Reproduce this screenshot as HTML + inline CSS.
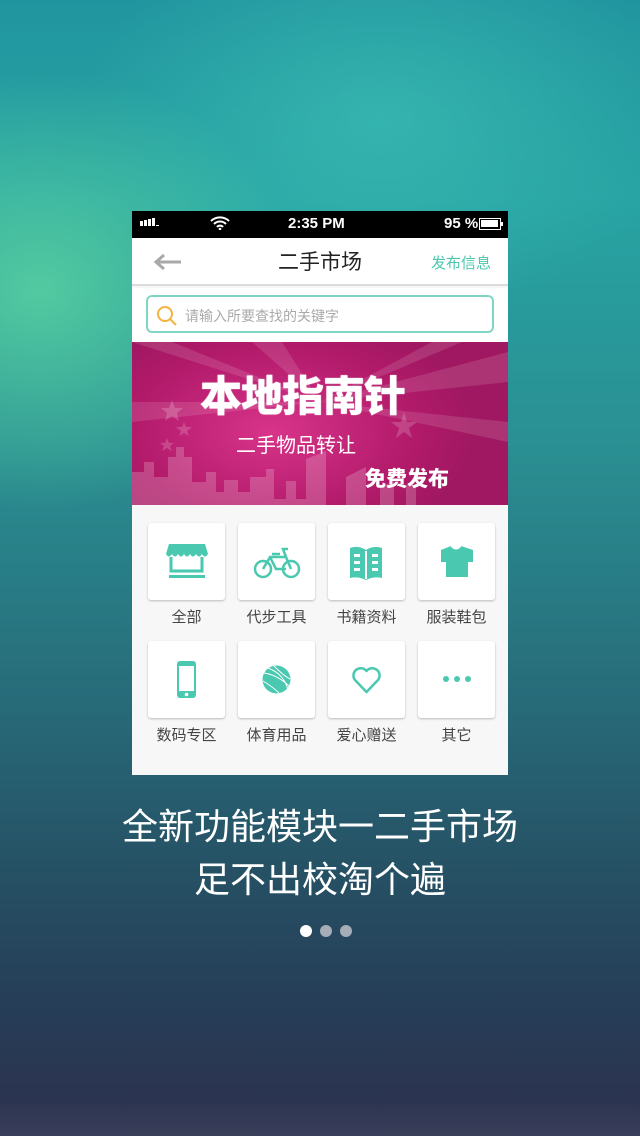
<!DOCTYPE html>
<html><head><meta charset="utf-8"><style>
*{margin:0;padding:0;box-sizing:border-box}
body{width:640px;height:1136px;overflow:hidden;position:relative;font-family:"Liberation Sans","Noto Sans CJK SC",sans-serif;
background:
radial-gradient(ellipse 260px 220px at 40px 290px,rgba(90,210,160,.85),rgba(90,210,160,0) 100%),
radial-gradient(ellipse 300px 200px at 380px 120px,rgba(60,190,180,.7),rgba(60,190,180,0) 100%),
linear-gradient(180deg,#21959f 0px,#27a3a3 200px,#2a8f92 450px,#276b79 700px,#265467 850px,#263e58 1000px,#2b3450 1100px,#3a3f5a 1136px);}
.abs{position:absolute}
.phone{left:132px;top:211px;width:376px;height:564px;background:#f7f7f7;overflow:hidden}
.sb{left:0;top:0;width:376px;height:27px;background:#000;color:#fff;font-size:15px;font-weight:bold}
.nav{left:0;top:27px;width:376px;height:48px;background:#fff;border-bottom:2px solid #dcdcdc}
.srch{left:0;top:77px;width:376px;height:54px;background:#fff}
.box{left:14px;top:7px;width:348px;height:38px;border:2px solid #7fd6c4;border-radius:6px}
.banner{left:0;top:131px;width:376px;height:163px;background:radial-gradient(ellipse 200px 120px at 140px 90px,#d8348a,#b21a6a 70%,#a11862);overflow:hidden}
.tile{width:77px;height:77px;background:#fff;border-radius:3px;box-shadow:0 1px 2px rgba(0,0,0,.25)}
.lbl{width:77px;text-align:center;font-size:15px;color:#444}
.cap{left:0;width:640px;text-align:center;color:#fff;font-size:36px}
</style></head><body>
<div class="abs phone">
 <div class="abs sb">
  <div class="abs" style="left:8px;top:10px;width:3px;height:5px;background:#fff"></div>
  <div class="abs" style="left:12px;top:9px;width:3px;height:6px;background:#fff"></div>
  <div class="abs" style="left:16px;top:8px;width:3px;height:7px;background:#fff"></div>
  <div class="abs" style="left:20px;top:7px;width:3px;height:8px;background:#fff"></div>
  <div class="abs" style="left:24px;top:14px;width:3px;height:1px;background:#fff"></div>
  <svg class="abs" style="left:78px;top:5px" width="20" height="14" viewBox="0 0 20 14"><path d="M1 5a13 13 0 0 1 18 0M4 8a8.5 8.5 0 0 1 12 0M7 11a4 4 0 0 1 6 0" stroke="#fff" stroke-width="2" fill="none"/><circle cx="10" cy="13" r="1.3" fill="#fff"/></svg>
  <div class="abs" style="left:156px;top:4px">2:35 PM</div>
  <div class="abs" style="left:312px;top:4px">95 %</div>
  <div class="abs" style="left:347px;top:7px;width:22px;height:12px;border:1.5px solid #fff"><div style="margin:1px;width:17px;height:7px;background:#fff"></div></div>
  <div class="abs" style="left:369px;top:11px;width:2px;height:4px;background:#fff"></div>
 </div>
 <div class="abs nav">
  <svg class="abs" style="left:22px;top:16px" width="28" height="16" viewBox="0 0 28 16"><path d="M27 8H3M10 1L2 8l8 7" stroke="#a9a9a9" stroke-width="3" fill="none"/></svg>
  <div class="abs" style="left:0;width:376px;top:8px;text-align:center;font-size:21px;color:#222">二手市场</div>
  <div class="abs" style="left:299px;top:14px;font-size:15px;color:#4cc7ad">发布信息</div>
 </div>
 <div class="abs srch"><div class="abs box">
  <svg class="abs" style="left:8px;top:8px" width="22" height="22" viewBox="0 0 22 22"><circle cx="9" cy="9" r="7" stroke="#f3b341" stroke-width="2" fill="none"/><path d="M14 14l6 6" stroke="#f3b341" stroke-width="2"/></svg>
  <div class="abs" style="left:37px;top:9px;font-size:14px;color:#aaa">请输入所要查找的关键字</div>
 </div></div>
 <div class="abs banner">
  <svg class="abs" style="left:0;top:0" width="376" height="163" viewBox="0 0 376 163">
   <g fill="rgba(255,255,255,.12)"><polygon points="188,60 0,0 40,0"/><polygon points="188,60 376,10 376,40"/><polygon points="188,60 376,80 376,100"/><polygon points="188,60 120,0 150,0"/><polygon points="188,60 300,0 330,0"/><polygon points="188,60 0,60 0,80"/></g>
   <g fill="rgba(255,255,255,.2)"><path d="M0 163V130h12v-10h10v15h14v-20h8v-10h8v10h8v25h14v-10h10v20h8v-12h14v12h12v-15h16v-8h8v30h12v-18h10v18h10v-40l20-8v56h20v-30l20-10v40h14v-20l14-6v26h12v-22h10v22z"/></g>
   <g fill="rgba(255,255,255,.18)"><polygon points="40,58 43,66 51,66 45,71 47,79 40,74 33,79 35,71 29,66 37,66"/><polygon points="52,80 54,85 60,85 55,89 57,94 52,91 47,94 49,89 44,85 50,85"/><polygon points="35,96 37,101 42,101 38,104 40,109 35,106 30,109 32,104 28,101 33,101"/><polygon points="272,70 275,80 285,80 277,86 280,96 272,90 264,96 267,86 259,80 269,80"/></g>
  </svg>
  <div class="abs" style="left:68px;top:21px;font-size:42px;font-weight:900;color:#fff;letter-spacing:-1px;text-shadow:0 0 1px #fff">本地指南针</div>
  <div class="abs" style="left:104px;top:87px;font-size:20px;color:#fff">二手物品转让</div>
  <div class="abs" style="left:233px;top:121px;font-size:21px;font-weight:900;color:#fff">免费发布</div>
 </div>
 <div class="abs tile" style="left:16px;top:312px"><svg width="77" height="77" viewBox="0 0 77 77"><path d="M21 21h36l3 10H18z" fill="#4ac9b0"/><path d="M18 31q3 5 6 0q3 5 6 0q3 5 6 0q3 5 6 0q3 5 6 0q3 5 6 0q3 5 6 0" fill="#4ac9b0"/><path d="M23 34v14h31V34" stroke="#4ac9b0" stroke-width="3" fill="none"/><rect x="21" y="52" width="36" height="3" fill="#4ac9b0"/></svg></div>
 <div class="abs tile" style="left:106px;top:312px"><svg width="77" height="77" viewBox="0 0 77 77" fill="none" stroke="#4ac9b0" stroke-width="2.5"><circle cx="25" cy="46" r="8"/><circle cx="53" cy="46" r="8"/><path d="M25 46l7-12h16l5 12M32 34l6 12h10M34 31h8M48 34l-3-8h5"/></svg></div>
 <div class="abs tile" style="left:196px;top:312px"><svg width="77" height="77" viewBox="0 0 77 77"><path d="M22 25q8-3 16 2q8-5 16-2v30q-8-2-16 2q-8-4-16-2z" fill="#4ac9b0"/><g fill="#fff"><rect x="26" y="31" width="6" height="3"/><rect x="26" y="38" width="6" height="3"/><rect x="26" y="45" width="6" height="3"/><rect x="44" y="31" width="6" height="3"/><rect x="44" y="38" width="6" height="3"/><rect x="44" y="45" width="6" height="3"/><rect x="37" y="28" width="2" height="28"/></g></svg></div>
 <div class="abs tile" style="left:286px;top:312px"><svg width="77" height="77" viewBox="0 0 77 77"><path d="M33 23q5 5 10 0l12 4v12h-5v15H28V39h-5V27z" fill="#4ac9b0"/><path d="M33 23q5 6 10 0" stroke="#fff" stroke-width="1" fill="none"/></svg></div>
 <div class="abs lbl" style="left:16px;top:395px">全部</div>
 <div class="abs lbl" style="left:106px;top:395px">代步工具</div>
 <div class="abs lbl" style="left:196px;top:395px">书籍资料</div>
 <div class="abs lbl" style="left:286px;top:395px">服装鞋包</div>
 <div class="abs tile" style="left:16px;top:430px"><svg width="77" height="77" viewBox="0 0 77 77"><rect x="29" y="20" width="19" height="37" rx="3" fill="#4ac9b0"/><rect x="31" y="25" width="15" height="25" fill="#fff"/><circle cx="38.5" cy="53.5" r="1.8" fill="#fff"/></svg></div>
 <div class="abs tile" style="left:106px;top:430px"><svg width="77" height="77" viewBox="0 0 77 77"><circle cx="38.5" cy="38.5" r="14" fill="#4ac9b0"/><path d="M26 32q14 2 26 14M30 27q16 6 20 22M25 40q10 6 16 12M36 25q10 10 16 13" stroke="#fff" stroke-width="1" fill="none"/></svg></div>
 <div class="abs tile" style="left:196px;top:430px"><svg width="77" height="77" viewBox="0 0 77 77"><path d="M38.5 51L27 39a7 7 0 0 1 11.5-9a7 7 0 0 1 11.5 9z" stroke="#4ac9b0" stroke-width="2.5" fill="none" stroke-linejoin="round"/></svg></div>
 <div class="abs tile" style="left:286px;top:430px"><svg width="77" height="77" viewBox="0 0 77 77" fill="#4ac9b0"><circle cx="28" cy="38" r="3"/><circle cx="39" cy="38" r="3"/><circle cx="50" cy="38" r="3"/></svg></div>
 <div class="abs lbl" style="left:16px;top:513px">数码专区</div>
 <div class="abs lbl" style="left:106px;top:513px">体育用品</div>
 <div class="abs lbl" style="left:196px;top:513px">爱心赠送</div>
 <div class="abs lbl" style="left:286px;top:513px">其它</div>
</div>
<div class="abs cap" style="top:798px">全新功能模块一二手市场</div>
<div class="abs cap" style="top:851px">足不出校淘个遍</div>
<div class="abs" style="left:300px;top:925px;width:12px;height:12px;border-radius:50%;background:#fff"></div>
<div class="abs" style="left:320px;top:925px;width:12px;height:12px;border-radius:50%;background:#a5adb6"></div>
<div class="abs" style="left:340px;top:925px;width:12px;height:12px;border-radius:50%;background:#a5adb6"></div>
</body></html>
